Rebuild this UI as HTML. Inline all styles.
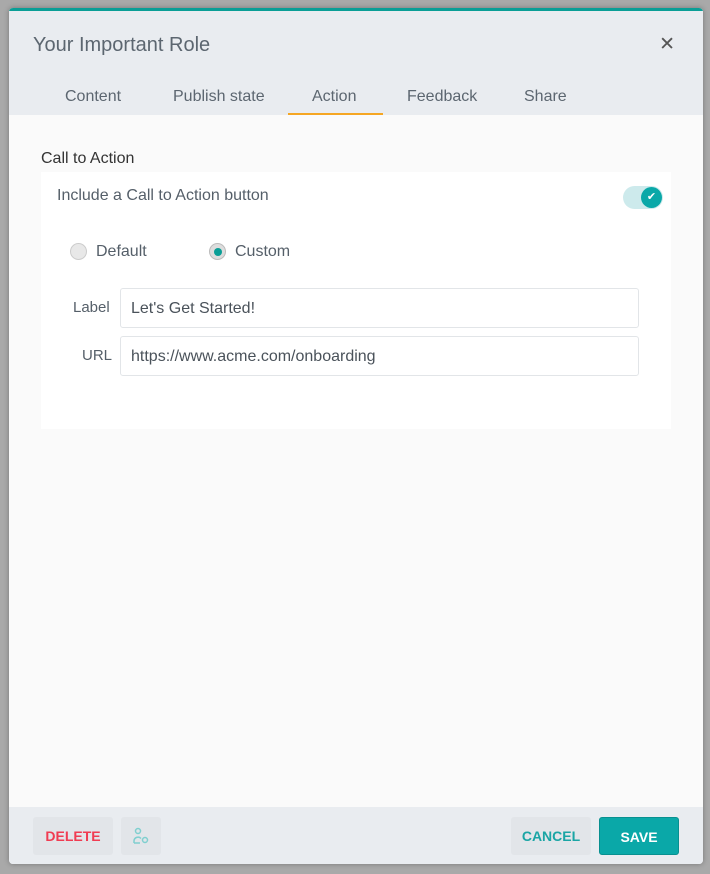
<!DOCTYPE html>
<html><head><style>
*{box-sizing:border-box;margin:0;padding:0}
body{width:710px;height:874px;background:#a9a9a9;font-family:"Liberation Sans",sans-serif;position:relative;overflow:hidden}
.modal{position:absolute;left:9px;top:8px;width:694px;height:856px;background:#fafafa;border-radius:4px;overflow:hidden;box-shadow:0 0 6px rgba(0,0,0,.3)}
.bar{position:absolute;left:0;top:0;right:0;height:3px;background:#0a9e96}
.head{position:absolute;left:0;top:3px;right:0;height:104px;background:#e9ecf0}
.title{position:absolute;left:24px;top:23px;font-size:20px;color:#5c6670}
.x{position:absolute;right:28px;top:22px;font-size:19px;color:#555}
.tab{position:absolute;top:77px;font-size:16px;color:#5c6670}
.ul{position:absolute;left:279px;top:105px;width:95px;height:2px;background:#f5a623}
.t{position:absolute;color:#555f69}
.card{position:absolute;left:32px;top:164px;width:630px;height:257px;background:#fff}
.inp{position:absolute;left:111px;width:519px;height:40px;border:1px solid #e2e5e8;border-radius:3px;background:#fff;font-size:16px;color:#4a525a;padding:11px 10px}
.foot{position:absolute;left:0;top:799px;right:0;height:57px;background:#e9ecf0}
.btn{position:absolute;top:10px;height:38px;border-radius:3px;font-weight:bold;font-size:14px;text-align:center;line-height:38px}
</style></head><body>
<div class="modal">
<div class="bar"></div>
<div class="head">
<div class="title">Your Important Role</div>
<div class="x">✕</div>
<div class="tab" style="left:56px">Content</div>
<div class="tab" style="left:164px">Publish state</div>
<div class="tab" style="left:303px">Action</div>
<div class="tab" style="left:398px">Feedback</div>
<div class="tab" style="left:515px">Share</div>
</div>
<div class="ul"></div>
<div class="t" style="left:32px;top:142px;font-size:16px;color:#333">Call to Action</div>
<div class="card">
<div class="t" style="left:16px;top:15px;font-size:16px">Include a Call to Action button</div>
<div style="position:absolute;left:582px;top:14px;width:40px;height:23px;border-radius:12px;background:#cdeaec"></div>
<div style="position:absolute;left:600px;top:15px;width:21px;height:21px;border-radius:50%;background:#0aa8a8;color:#fff;font-size:11px;text-align:center;line-height:21px">✔</div>
<div style="position:absolute;left:29px;top:71px;width:17px;height:17px;border-radius:50%;background:#e8e8e8;border:1px solid #ccc"></div>
<div class="t" style="left:55px;top:71px;font-size:16px">Default</div>
<div style="position:absolute;left:168px;top:71px;width:17px;height:17px;border-radius:50%;background:#ddd;border:1px solid #bbb"></div>
<div style="position:absolute;left:173px;top:76px;width:8px;height:8px;border-radius:50%;background:#0a9e96"></div>
<div class="t" style="left:194px;top:71px;font-size:16px">Custom</div>
<div class="t" style="left:32px;top:127px;font-size:15px">Label</div>
<div class="inp" style="top:116px;left:79px">Let's Get Started!</div>
<div class="t" style="left:41px;top:175px;font-size:15px">URL</div>
<div class="inp" style="top:164px;left:79px">https://www.acme.com/onboarding</div>
</div>
<div class="foot">
<div class="btn" style="left:24px;width:80px;background:#e2e5e9;color:#f03c52">DELETE</div>
<div class="btn" style="left:112px;width:40px;background:#e2e5e9;color:#6cc">
<svg width="18" height="18" viewBox="0 0 18 18" style="margin-top:10px" fill="none" stroke="#7fcfcf" stroke-width="1.5"><circle cx="6" cy="4" r="2.5"/><path d="M2 16v-2a4 4 0 0 1 7-2.5M2 16h6"/><circle cx="13" cy="13" r="2.5"/></svg></div>
<div class="btn" style="left:502px;width:80px;background:#e2e5e9;color:#1aa5a5">CANCEL</div>
<div class="btn" style="left:590px;width:80px;background:#0aa8a8;color:#fff;border:1px solid #089090">SAVE</div>
</div>
</div>
</body></html>
